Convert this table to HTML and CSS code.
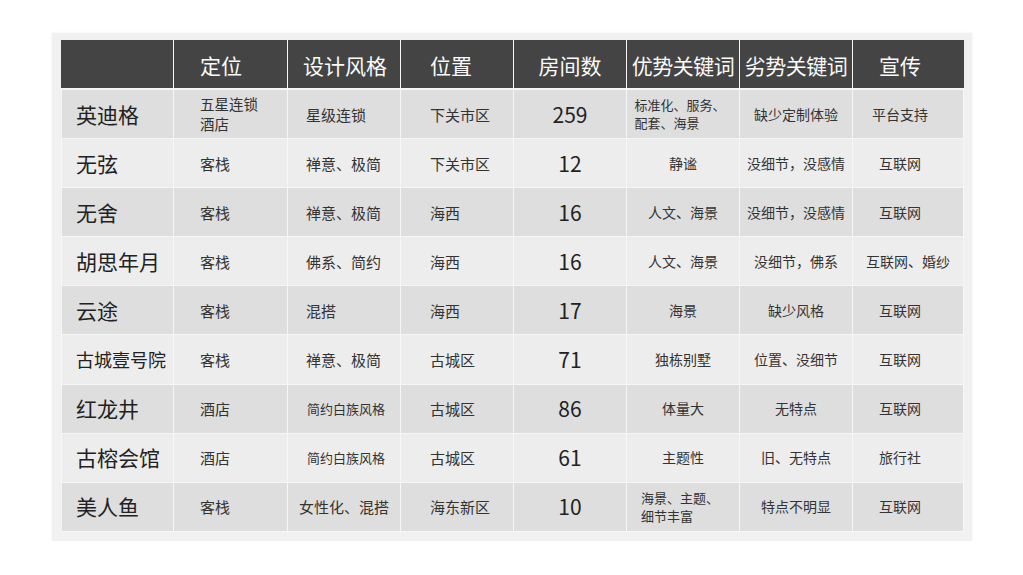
FILE: index.html
```html
<!DOCTYPE html>
<html lang="zh">
<head>
<meta charset="utf-8">
<title>客栈对比</title>
<link rel="stylesheet" href="styles.css">
</head>
<body>
<div class="frame">
<table class="grid">
<colgroup>
<col class="w1"><col class="w2"><col class="w3"><col class="w4"><col class="w5"><col class="w6"><col class="w7"><col class="w8">
</colgroup>
<thead>
<tr><th></th><th>定位</th><th>设计风格</th><th>位置</th><th>房间数</th><th>优势关键词</th><th>劣势关键词</th><th>宣传</th></tr>
</thead>
<tbody>
<tr><td>英迪格</td><td><span class="two">五星连锁<br>酒店</span></td><td>星级连锁</td><td>下关市区</td><td>259</td><td><span class="two sm">标准化、服务、<br>配套、海景</span></td><td>缺少定制体验</td><td>平台支持</td></tr>
<tr><td>无弦</td><td>客栈</td><td>禅意、极简</td><td>下关市区</td><td>12</td><td>静谧</td><td>没细节，没感情</td><td>互联网</td></tr>
<tr><td>无舍</td><td>客栈</td><td>禅意、极简</td><td>海西</td><td>16</td><td>人文、海景</td><td>没细节，没感情</td><td>互联网</td></tr>
<tr><td>胡思年月</td><td>客栈</td><td>佛系、简约</td><td>海西</td><td>16</td><td>人文、海景</td><td>没细节，佛系</td><td class="wide">互联网、婚纱</td></tr>
<tr><td>云途</td><td>客栈</td><td>混搭</td><td>海西</td><td>17</td><td>海景</td><td>缺少风格</td><td>互联网</td></tr>
<tr><td class="long">古城壹号院</td><td>客栈</td><td>禅意、极简</td><td>古城区</td><td>71</td><td>独栋别墅</td><td>位置、没细节</td><td>互联网</td></tr>
<tr><td>红龙井</td><td>酒店</td><td class="small">简约白族风格</td><td>古城区</td><td>86</td><td>体量大</td><td>无特点</td><td>互联网</td></tr>
<tr><td>古榕会馆</td><td>酒店</td><td class="small">简约白族风格</td><td>古城区</td><td>61</td><td>主题性</td><td>旧、无特点</td><td>旅行社</td></tr>
<tr><td>美人鱼</td><td>客栈</td><td class="mid">女性化、混搭</td><td>海东新区</td><td>10</td><td><span class="two sm">海景、主题、<br>细节丰富</span></td><td>特点不明显</td><td>互联网</td></tr>
</tbody>
</table>
</div>
</body>
</html>
```

FILE: styles.css
```css
html, body {
  margin: 0;
  padding: 0;
  background: #ffffff;
}
body {
  font-family: "Noto Sans CJK SC", "Noto Sans", "Liberation Sans", sans-serif;
  color: #333333;
}
.frame {
  margin: 33px 0 0 52px;
  width: 902px;
  padding: 7px 9px 9px 9px;
  background: #f1f1f1;
  box-shadow: 0 0 3px rgba(0, 0, 0, 0.06);
}
.grid {
  width: 902px;
  table-layout: fixed;
  border-collapse: collapse;
}
.w1 { width: 112px; }
.w2 { width: 114px; }
.w3 { width: 113px; }
.w4 { width: 113px; }
.w5 { width: 113px; }
.w6 { width: 113px; }
.w7 { width: 113px; }
.w8 { width: 111px; }

.grid th, .grid td {
  border: 1px solid #f6f6f6;
  padding: 0;
  white-space: nowrap;
  overflow: hidden;
}
.grid th {
  background: #444444;
  color: #fafafa;
  font-weight: 400;
  font-size: 21px;
  height: 47px;
  border-top-color: #444444;
  border-bottom: 2px solid #f6f6f6;
}
.grid th:first-child { border-left-color: #444444; }
.grid th:last-child { border-right-color: #444444; }

.grid td {
  height: 48.1px;
  font-size: 15px;
  line-height: 19px;
}
.grid tbody tr:nth-child(odd) td { background: #dedede; }
.grid tbody tr:nth-child(even) td { background: #ededed; }

/* column alignment */
.grid tr > :nth-child(1) { text-align: left; padding-left: 14px; }
.grid tr > :nth-child(2) { text-align: left; padding-left: 26px; }
.grid tr > :nth-child(3) { text-align: left; padding-left: 18px; }
.grid th:nth-child(3) { padding-left: 15px; }
.grid tr > :nth-child(4) { text-align: left; padding-left: 29px; }
.grid tr > :nth-child(5) { text-align: center; }
.grid tr > :nth-child(6) { text-align: center; }
.grid tr > :nth-child(7) { text-align: center; }
.grid tr > :nth-child(8) { text-align: center; padding-right: 16px; }
.grid th:nth-child(6), .grid th:nth-child(7) { letter-spacing: -0.5px; }

.grid td:nth-child(1) {
  font-size: 21px;
  color: #222222;
}
.grid td.long { font-size: 18px; letter-spacing: 0; }
.grid td:nth-child(5) {
  font-size: 21px;
  color: #222222;
}
.grid td:nth-child(6),
.grid td:nth-child(7),
.grid td:nth-child(8) {
  font-size: 14px;
}
.grid td.small { font-size: 13px; padding-left: 19px; }
.grid td.mid { padding-left: 11px; }
.grid td.wide { padding-right: 0; }

.two {
  display: inline-block;
  text-align: left;
  vertical-align: middle;
  font-size: 14.5px;
  line-height: 20px;
}
.two.sm {
  font-size: 13px;
  line-height: 18px;
  margin-left: -6px;
}
```
